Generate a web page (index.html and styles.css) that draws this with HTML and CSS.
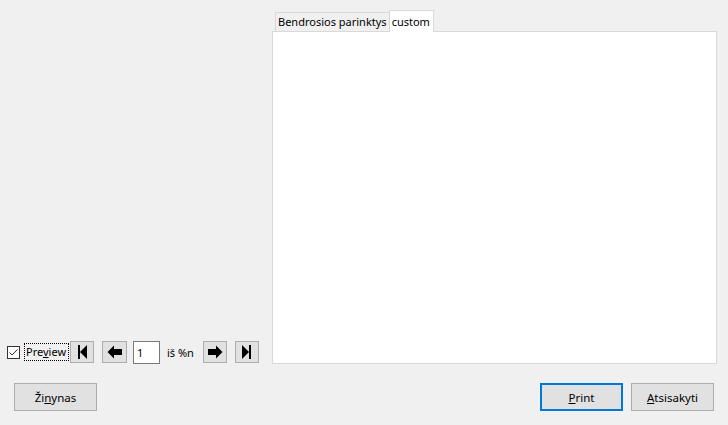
FILE: index.html
```html
<!DOCTYPE html>
<html>
<head>
<meta charset="utf-8">
<link rel="stylesheet" href="styles.css">
</head>
<body>
<div class="dialog">
  <div class="main">
    <div class="left">
      <div class="nav">
        <label class="check">
          <span class="box"><svg width="11" height="11" viewBox="0 0 11 11"><path d="M1.5 5.5 L4 8 L9.5 2.5" fill="none" stroke="#333" stroke-width="1"/></svg></span>
          <span class="focus">Pre<u>v</u>iew</span>
        </label>
        <button class="nbtn first"><svg width="12" height="14" viewBox="0 0 12 14"><rect x="2" y="0" width="2" height="14" fill="#000"/><path d="M11 0 L4 7 L11 14 Z" fill="#000"/></svg></button>
        <button class="nbtn prev"><svg width="16" height="14" viewBox="0 0 16 14"><path d="M0.5 7 L7 0.5 L7 4 L15 4 L15 10 L7 10 L7 13.5 Z" fill="#000"/></svg></button>
        <input class="page" type="text" value="1">
        <span class="of">iš %n</span>
        <button class="nbtn next"><svg width="16" height="14" viewBox="0 0 16 14"><path d="M15.5 7 L9 0.5 L9 4 L1 4 L1 10 L9 10 L9 13.5 Z" fill="#000"/></svg></button>
        <button class="nbtn last"><svg width="12" height="14" viewBox="0 0 12 14"><path d="M1 0 L8 7 L1 14 Z" fill="#000"/><rect x="8" y="0" width="2" height="14" fill="#000"/></svg></button>
      </div>
    </div>
    <div class="right">
      <div class="tabs">
        <div class="tab">Bendrosios parinktys</div>
        <div class="tab active">custom</div>
      </div>
      <div class="panel"></div>
    </div>
  </div>
  <div class="footer">
    <button class="btn">Ži<u>n</u>ynas</button>
    <div class="spacer"></div>
    <button class="btn default"><u>P</u>rint</button>
    <button class="btn"><u>A</u>tsisakyti</button>
  </div>
</div>
</body>
</html>
```

FILE: styles.css
```css
html, body {
  margin: 0;
  padding: 0;
  background: #f0f0f0;
  font-family: "Noto Sans", "Open Sans", sans-serif;
  font-size: 11px;
  color: #000;
}
.dialog {
  width: 728px;
  height: 425px;
  display: flex;
  flex-direction: column;
}
.main {
  display: flex;
  padding: 9px 11px 0 7px;
  height: 355px;
}
.left {
  width: 265px;
  display: flex;
  align-items: flex-end;
}
.nav {
  display: flex;
  align-items: center;
  height: 24px;
}
.check {
  display: flex;
  align-items: center;
}
.box {
  width: 11px;
  height: 11px;
  border: 1px solid #333;
  background: #fff;
  display: flex;
  margin-right: 4px;
}
.focus {
  box-sizing: border-box;
  width: 45px;
  border: 1px dotted #000;
  padding: 0 0 0 1px;
  height: 18px;
  line-height: 16px;
  white-space: nowrap;
  overflow: hidden;
}
.nbtn {
  width: 24px;
  height: 22px;
  background: #e1e1e1;
  border: 1px solid #adadad;
  padding: 0;
  display: flex;
  align-items: center;
  justify-content: center;
  margin-left: 8px;
  flex: none;
}
.nbtn.first { margin-left: 1px; }
.nbtn.prev { width: 25px; }
.nbtn.next { margin-left: 0; }
.page {
  width: 27px;
  height: 23px;
  box-sizing: border-box;
  border: 1px solid #7a7a7a;
  background: #fff;
  font-family: "Noto Sans", sans-serif;
  font-size: 11px;
  padding: 0 3px;
  margin-left: 6px;
  flex: none;
}
.of {
  margin-left: 7px;
  width: 36px;
  flex: none;
}
.right {
  flex: 1;
  display: flex;
  flex-direction: column;
}
.tabs {
  display: flex;
  align-items: flex-end;
  padding-left: 3px;
  height: 22px;
}
.tab {
  height: 18px;
  line-height: 18px;
  padding: 0 2px;
  border: 1px solid #d9d9d9;
  border-bottom: none;
  background: #f0f0f0;
  white-space: nowrap;
}
.tab.active {
  height: 21px;
  line-height: 21px;
  background: #fff;
  margin-left: -1px;
  margin-bottom: -1px;
  position: relative;
  z-index: 1;
  padding: 0 3px 0 2px;
}
.panel {
  flex: 1;
  background: #fff;
  border: 1px solid #d9d9d9;
}
.footer {
  display: flex;
  padding: 19px 14px 0 14px;
}
.spacer { flex: 1; }
.btn {
  width: 83px;
  height: 28px;
  background: #e1e1e1;
  border: 1px solid #adadad;
  font-family: "Noto Sans", sans-serif;
  font-size: 11.5px;
  padding: 0;
  margin-left: 8px;
}
.btn:first-child { margin-left: 0; }
.btn.default {
  border: 2px solid #0078d7;
}
```
